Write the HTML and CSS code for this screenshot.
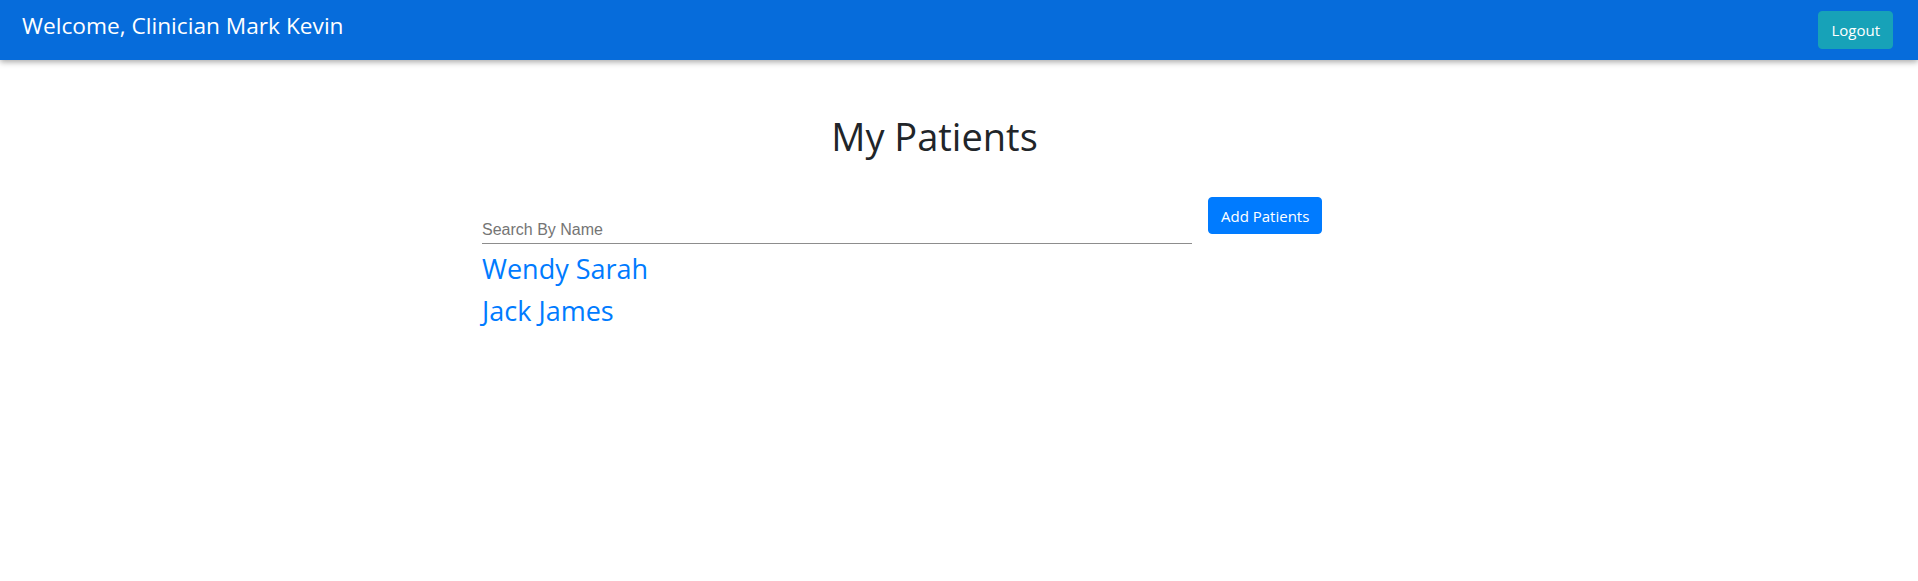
FILE: index.html
```html
<!DOCTYPE html>
<html lang="en">
<head>
<meta charset="utf-8">
<title>My Patients</title>
<link rel="stylesheet" href="styles.css">
</head>
<body>
<header class="navbar">
  <div class="brand">Welcome, Clinician Mark Kevin</div>
  <button class="btn btn-info" type="button">Logout</button>
</header>
<main class="page">
  <h1 class="title">My Patients</h1>
  <div class="search-row">
    <input class="search" type="text" placeholder="Search By Name">
    <button class="btn btn-primary" type="button">Add Patients</button>
  </div>
  <ul class="patients">
    <li><a class="patient" href="#">Wendy Sarah</a></li>
    <li><a class="patient" href="#">Jack James</a></li>
  </ul>
</main>
</body>
</html>
```
FILE: styles.css
```css
* { box-sizing: border-box; }
html, body { margin: 0; padding: 0; }
body {
  font-family: "Open Sans", "Noto Sans", sans-serif;
  color: #212529;
  background: #fff;
  font-size: 16px;
}
.navbar {
  height: 60px;
  background: #066cdb;
  display: flex;
  align-items: center;
  justify-content: space-between;
  padding: 0 25px 0 22px;
  box-shadow: 0 2px 6px rgba(0,0,0,0.35);
}
.brand {
  color: #fff;
  font-size: 22.7px;
  line-height: 28px;
  margin-top: -8px;
}
.btn {
  font-family: "Open Sans", "Noto Sans", sans-serif;
  font-size: 15px;
  line-height: 24px;
  padding: 6px 12px;
  border: 1px solid transparent;
  border-radius: 4px;
  color: #fff;
  cursor: pointer;
}
.btn-info { background: #17a2b8; border-color: #17a2b8; height: 38px; margin-top: -1px; }
.btn-primary { background: #007bff; border-color: #007bff; height: 37px; }
.page {
  width: 905px;
  margin-left: calc(50% - 477px);
  padding-top: 52px;
}
.title {
  margin: 0;
  text-align: center;
  font-weight: 400;
  font-size: 38px;
  line-height: 48px;
}
.search-row {
  display: flex;
  align-items: flex-end;
  gap: 16px;
  margin-top: 37px;
}
.search {
  width: 710px;
  font-family: "Liberation Sans", Arial, sans-serif;
  font-size: 16px;
  padding: 2px 0 4px 0;
  border: none;
  border-bottom: 1px solid #8d8d8d;
  outline: none;
  color: #495057;
  margin-bottom: -10px;
}
.search::placeholder { color: #757575; }
.patients {
  list-style: none;
  margin: 18px 0 0 0;
  padding: 0;
}
.patients li { margin-bottom: 8px; }
.patient {
  color: #007bff;
  text-decoration: none;
  font-size: 27px;
  line-height: 34px;
}
```
